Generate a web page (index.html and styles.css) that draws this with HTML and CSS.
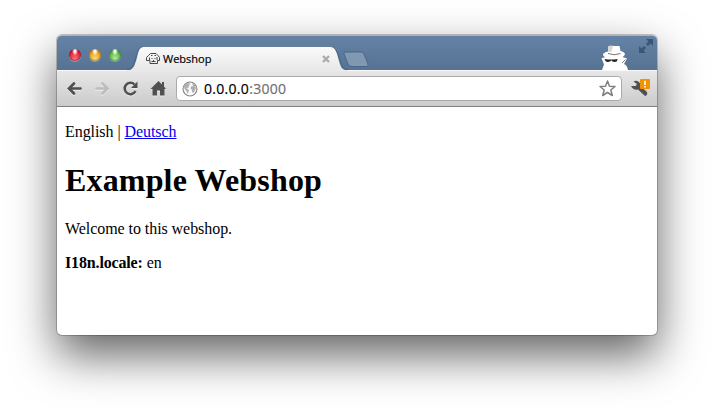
FILE: index.html
```html
<!DOCTYPE html>
<html lang="en">
<head>
<meta charset="utf-8">
<title>Webshop</title>
<link rel="stylesheet" href="styles.css">
</head>
<body>
<div class="window">
  <header class="titlebar">
    <div class="lights"><i class="light red"></i><i class="light yellow"></i><i class="light green"></i></div>
    <div class="tab">
      <svg class="tab-shape" width="221" height="25" viewBox="0 0 221 25">
        <defs><linearGradient id="tabfill" x2="0" y2="1"><stop stop-color="#fafafa"/><stop offset="1" stop-color="#e8e8e8"/></linearGradient></defs>
        <path d="M0 24.500C6 24 7 21 9 15S11 .5 17 .5H203C209 .5 210 8 212 15S215 24 221 24.500V25H0Z" fill="url(#tabfill)"/>
        <path d="M0 23.500C6 23 6 20 8 14S11 .5 17 .5H203C209 .5 211 8 213 14S215 23 221 23.500" fill="none" stroke="#425c7b" stroke-opacity=".65"/>
      </svg>
      <svg class="favicon" width="16" height="16" viewBox="0 0 16 16" fill="none" stroke="#333" stroke-width=".9">
        <path d="M3.500 4.500L5.500 2.500H11L13 4.500L14.500 6.500V9.500H12.500V12.500H5V9.500M3.500 4.500L1.500 6.500V9.500H4.500V6.500M6 4.500H7.500M9.500 4.500H11M12 6V9M6.500 7.500H7.500M9.500 7.500H10.500M6.500 10.500H10.500M8.500 9V10"/>
      </svg>
      <span class="tab-title">Webshop</span>
      <svg class="close" width="8" height="8" viewBox="0 0 8 8"><path d="M1 1L7 7M7 1L1 7" stroke="#aaa" stroke-width="2.300"/></svg>
    </div>
    <svg class="newtab" width="27" height="17" viewBox="0 0 27 17"><path d="M3 1H18Q20 1 21 3L25 13Q26 15.500 23 15.500H9Q6 15.500 5 13L1 3Q.5 1 3 1Z" fill="#8198b3" stroke="#49668a"/></svg>
    <svg class="agent" width="30" height="26" viewBox="0 0 30 26">
      <path d="M2 26L4 20.500L1.500 14L5 13.500Q2 11 3.500 9.500Q5 8 8 7.500L8.500 2Q12 1.500 15 2L19.500 2L20.500 7Q24.500 8 25 10Q24.500 12 22.500 13L27 14.500L24 20Q27 21 28 26Z" fill="#fff"/>
      <path d="M8.500 2Q11 1.500 13 2L11.500 8L8 7.500Z" fill="#d8d8d8"/>
      <path d="M8 9.500Q14 12 20.500 9.500" fill="none" stroke="#666" stroke-width=".9"/>
      <path d="M4.500 15Q11 16 17.500 15L17 17.200Q14.500 18.500 12.500 17.500L11.300 16.300L10 17.500Q7 18.500 5.500 17Z" fill="#222"/>
      <path d="M22 19L25.500 15.500" stroke="#666" stroke-width=".8"/>
    </svg>
    <svg class="expand" width="16" height="16" viewBox="0 0 16 16"><path d="M8 1H15V8L12.500 5.500L10 8L8 6L10.500 3.500ZM1 8L3.500 10.500L6 8L8 10L5.500 12.500L8 15H1Z" fill="#3c5573"/></svg>
  </header>
  <div class="toolbar">
    <svg class="ico" width="16" height="16" viewBox="0 0 16 16"><path d="M14.500 7.500H3.500M8 2.500L3 7.500L8 12.500" fill="none" stroke="#505050" stroke-width="2.700" stroke-linecap="round"/></svg>
    <svg class="ico" width="16" height="16" viewBox="0 0 16 16"><path d="M2.500 7.500H13M8.500 2.500L13.500 7.500L8.500 12.500" fill="none" stroke="#bdbdbd" stroke-width="2.700" stroke-linecap="round"/></svg>
    <svg class="ico" width="16" height="16" viewBox="0 0 16 16"><path d="M12.500 3.500A5.700 5.700 0 1 0 13.500 10" fill="none" stroke="#505050" stroke-width="2.500"/><path d="M15.500 .5V7H9Z" fill="#505050"/></svg>
    <svg class="ico" width="16" height="16" viewBox="0 0 16 16"><path d="M8.500 0L12 3.500V1H14V5.500L16 8H14.500V14.500H10V9.500H7V14.500H2.500V8H.5Z" fill="#505050"/></svg>
    <div class="address">
      <svg width="16" height="16" viewBox="0 0 16 16"><circle cx="8" cy="8" r="7" fill="#fafafa" stroke="#858585" stroke-width="1.100"/><path d="M2 5L4 2.500L7.500 2L8 3.500L6.500 5L7 6.500L4.500 7L7 9L6.500 11L5.500 13L4.500 10L2.500 8ZM10 2L13 4L14 7.500L13 9L11.500 12L10 11V9L8.500 7.500L9 5.500L11 5Z" fill="#b0b0b0"/></svg>
      <span class="url">0.0.0.0<span>:3000</span></span>
      <svg class="star" width="18" height="18" viewBox="0 0 18 18"><path d="M9.500 1L11.500 6.200L17 6.500L12.800 10L14.300 15.500L9.500 12.500L4.700 15.500L6.200 10L2 6.500L7.500 6.200Z" fill="#fff" stroke="#808080" stroke-width="1.500" stroke-linejoin="round"/></svg>
    </div>
    <svg class="wrench" width="20" height="20" viewBox="0 0 20 20"><path d="M3.500 2.500Q7 .8 9.500 3.500Q10.500 5 10.500 7L17 13Q18 16 15 17L8 10.500Q3 11.500 1 7H5.500L7 5Z" fill="#505050"/><rect x="10" y="0" width="10" height="10" rx="1" fill="#f39200"/><path d="M15 1.700V6M15 7V8.500" stroke="#fff" stroke-width="1.600"/></svg>
  </div>
  <main class="page">
    <p>English | <a href="#">Deutsch</a></p>
    <h1>Example Webshop</h1>
    <p>Welcome to this webshop.</p>
    <p><b>I18n.locale:</b> en</p>
  </main>
</div>
</body>
</html>
```
FILE: styles.css
```css
body { margin: 0; height: 414px; overflow: hidden; background: #fff; }
svg { display: block; flex: none; }
.window { width: 600px; height: 300px; margin: 35px 0 0 57px; border-radius: 5px; display: flex; flex-direction: column; background: #fff; box-shadow: 0 0 0 1px rgba(0,0,0,.2), 0 20px 46px rgba(0,0,0,.62); }
.titlebar { height: 36px; box-sizing: border-box; display: flex; align-items: flex-end; border-radius: 5px 5px 0 0; background: linear-gradient(#6482a4, #567394); border-top: 1px solid #a6b3c1; border-bottom: 1px solid #f8f8f8; }
.lights { display: flex; gap: 8px; padding: 0 0 9px 12px; }
.light { width: 12px; height: 12px; border-radius: 50%; box-shadow: inset 0 0 2px rgba(0,0,0,.6), 0 1px 0 rgba(255,255,255,.3); }
.red { background: radial-gradient(ellipse at 50% 15%, #fff 0 10%, transparent 35%), radial-gradient(circle at 50% 80%, #ff7078, #d8142c 70%); }
.yellow { background: radial-gradient(ellipse at 50% 15%, #fff 0 10%, transparent 35%), radial-gradient(circle at 50% 80%, #ffe070, #e59110 70%); }
.green { background: radial-gradient(ellipse at 50% 15%, #fff 0 10%, transparent 35%), radial-gradient(circle at 50% 80%, #b0f58b, #48a83c 70%); }
.tab { width: 221px; height: 25px; margin: 0 0 -1px 6px; display: grid; grid-template-columns: 18px 16px 1fr 8px 18px; align-items: center; }
.tab-shape { grid-area: 1 / 1 / 2 / 6; }
.favicon { grid-area: 1 / 2; }
.tab-title { grid-area: 1 / 3; padding-left: 2px; font: 11px/14px "Open Sans", sans-serif; -webkit-text-stroke: .2px #000; color: #000; }
.close { grid-area: 1 / 4; }
.newtab { margin: 0 0 2px -5px; }
.agent { margin-left: auto; }
.expand { margin: 0 3px 16px 8px; }
.toolbar { height: 36px; box-sizing: border-box; display: flex; align-items: center; background: linear-gradient(#e7e7e7, #cbcbcb); border-bottom: 1px solid #808080; padding: 0 7px 0 9px; }
.ico { margin-right: 12px; filter: drop-shadow(0 1px 0 rgba(255,255,255,.5)); }
.address { flex: 1; height: 25px; box-sizing: border-box; margin-left: -2px; padding: 0 5px; display: flex; align-items: center; background: #fff; border: 1px solid #aaa; border-radius: 4px; }
.url { padding-left: 6px; font: 14px/20px "Open Sans", sans-serif; letter-spacing: .3px; -webkit-text-stroke: .2px currentColor; color: #000; }
.url span { color: #707070; }
.star { margin-left: auto; }
.wrench { margin-left: 8px; }
.page { padding: 0 8px; font: 16px/18px "Liberation Serif", serif; letter-spacing: -.06px; color: #000; }
.page p { margin: 16px 0; }
.page h1 { margin: 21px 0; font-size: 32px; line-height: 37px; letter-spacing: .16px; }
.page b { letter-spacing: -.15px; }
.page a { color: #00e; }
```
